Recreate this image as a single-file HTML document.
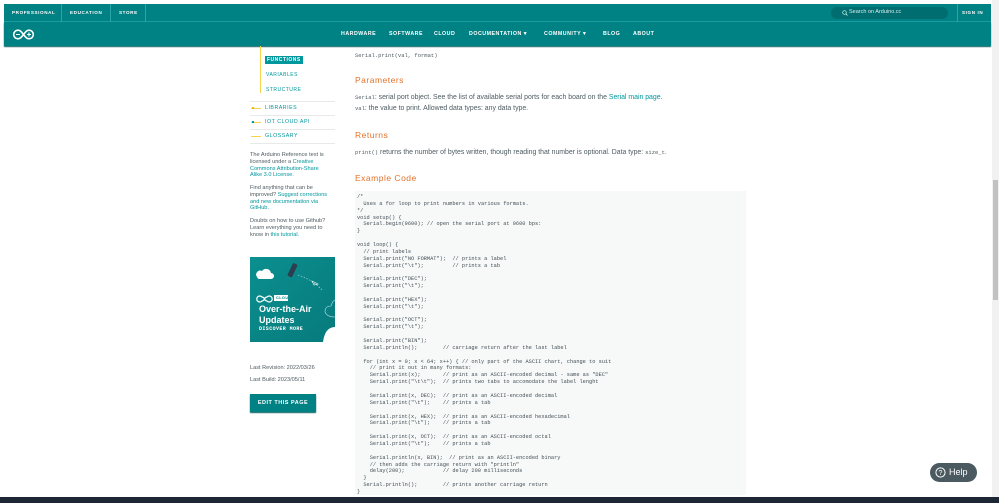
<!DOCTYPE html>
<html><head><meta charset="utf-8"><style>
*{margin:0;padding:0;box-sizing:border-box}
body{width:999px;height:503px;overflow:hidden;background:#fff;font-family:"Liberation Sans",sans-serif;position:relative;color:#4e5b61}
.abs{position:absolute}
.top{left:4px;top:4px;width:987px;height:18px;background:#008184;border-bottom:1px solid #1a9da0}
.top span{position:absolute;top:0;height:18px;line-height:17px;color:#fff;font-size:4.6px;font-weight:bold;letter-spacing:.6px}
.sep{position:absolute;top:0;width:1px;height:18px;background:#2aa5a8}
.nav{left:4px;top:22px;width:987px;height:24px;background:#008184;box-shadow:0 1px 1px #0a5e60}
.nav span{position:absolute;top:0;line-height:24px;color:#fff;font-size:5.3px;font-weight:bold;letter-spacing:.5px}
.side{font-size:5px;color:#00979d;letter-spacing:.5px;font-weight:bold}
.hr{position:absolute;left:250px;width:85px;height:1px;background:#e8eaea}
.small{font-size:5.6px;line-height:6.8px;color:#4e5b61;width:79px}
.small a{color:#00979d}
.mono{font-family:"Liberation Mono",monospace}
h3{position:absolute;left:355px;font-size:8.5px;font-weight:normal;color:#e47128;letter-spacing:.5px}
.p{position:absolute;left:355px;font-size:6.9px;color:#4e5b61}
pre{position:absolute;left:355px;top:191px;width:391px;height:304px;background:#f7f9f9;font-family:"Liberation Mono",monospace;font-size:5.3px;line-height:6.86px;padding:3px 0 0 2px;color:#434f54}
</style></head><body>
<div class="abs top">
<span style="left:8px">PROFESSIONAL</span><div class="sep" style="left:57px"></div>
<span style="left:66px">EDUCATION</span><div class="sep" style="left:106px"></div>
<span style="left:115px">STORE</span><div class="sep" style="left:141px"></div>
<div class="abs" style="left:827px;top:3px;width:117px;height:12px;border-radius:6px;background:#006d70"></div>
<svg class="abs" style="left:838px;top:6px" width="6" height="6" viewBox="0 0 6 6"><circle cx="2.5" cy="2.5" r="1.8" fill="none" stroke="#cfe" stroke-width=".7"/><path d="M3.8 3.8L5.5 5.5" stroke="#cfe" stroke-width=".7"/></svg>
<span style="left:845px;font-weight:normal;font-size:5.5px;letter-spacing:0;color:#d8eeee">Search on Arduino.cc</span>
<div class="sep" style="left:953px"></div>
<span style="left:958px">SIGN IN</span>
</div>
<div class="abs nav">
<svg class="abs" style="left:8px;top:7px" width="23" height="11" viewBox="0 0 23 11"><path d="M6 1.2A4.3 4.3 0 1 0 6 9.8C9 9.8 10 7 11.5 5.5 13 4 14 1.2 17 1.2A4.3 4.3 0 1 1 17 9.8C14 9.8 13 7 11.5 5.5 10 4 9 1.2 6 1.2Z" fill="none" stroke="#fff" stroke-width="1.6"/><path d="M4 5.5h4M15 5.5h4M17 3.5v4" stroke="#fff" stroke-width="1.1"/></svg>
<span style="left:337px">HARDWARE</span><span style="left:385px">SOFTWARE</span><span style="left:430px">CLOUD</span>
<span style="left:465px">DOCUMENTATION ▾</span><span style="left:540px">COMMUNITY ▾</span><span style="left:599px">BLOG</span><span style="left:629px">ABOUT</span>
</div>
<div class="abs" style="left:260px;top:46px;width:1px;height:47px;background:#f5d54b"></div>
<div class="abs side" style="left:265px;top:56px;background:#00979d;color:#fff;padding:1px 2px">FUNCTIONS</div>
<div class="abs side" style="left:266px;top:72px;font-weight:normal">VARIABLES</div>
<div class="abs side" style="left:266px;top:87px;font-weight:normal">STRUCTURE</div>
<div class="hr" style="top:101px"></div><div class="hr" style="top:115px"></div><div class="hr" style="top:129px"></div><div class="hr" style="top:143px"></div>
<div class="abs" style="left:251px;top:108px;width:10px;height:1px;background:#f5d54b"></div><div class="abs" style="left:252px;top:107px;width:2px;height:2px;background:#f5b90f"></div>
<div class="abs" style="left:251px;top:122px;width:10px;height:1px;background:#f5d54b"></div><div class="abs" style="left:252px;top:121px;width:2px;height:2px;background:#00979d"></div>
<div class="abs" style="left:251px;top:136px;width:10px;height:1px;background:#f5d54b"></div>
<div class="abs side" style="left:265px;top:105px;font-weight:normal;font-size:5.3px">LIBRARIES</div>
<div class="abs side" style="left:265px;top:119px;font-weight:normal;font-size:5.3px">IOT CLOUD API</div>
<div class="abs side" style="left:265px;top:133px;font-weight:normal;font-size:5.3px">GLOSSARY</div>
<div class="abs small" style="left:250px;top:152px">The Arduino Reference text is licensed under a <a>Creative Commons Attribution-Share Alike 3.0 License.</a></div>
<div class="abs small" style="left:250px;top:185px">Find anything that can be improved? <a>Suggest corrections and new documentation via GitHub.</a></div>
<div class="abs small" style="left:250px;top:218px">Doubts on how to use Github? Learn everything you need to know in <a>this tutorial.</a></div>
<div class="abs" style="left:250px;top:257px;width:85px;height:85px;background:linear-gradient(135deg,#0b8f8f,#077a7c);overflow:hidden">
<svg class="abs" style="left:0;top:0" width="85" height="85" viewBox="0 0 85 85"><path d="M7 20a4 4 0 0 1 5-6 5 5 0 0 1 9 2 3 3 0 0 1 0 6H9a3 3 0 0 1-2-2z" fill="#fff"/><rect x="40" y="6" width="5" height="14" rx="1" fill="#2c3e50" transform="rotate(25 42 13)"/><path d="M48 18q15 5 24 15" stroke="#cde" stroke-dasharray="1.5 1.5" fill="none" stroke-width=".6"/><path d="M62 24l6 3-4 1z" fill="none" stroke="#fff" stroke-width=".6"/><path d="M85 60q-8 0-10-5 0-6 6-6 2-6 4-6" fill="none" stroke="#bde" stroke-width=".6"/><path d="M85 70q-10 0-12 15h12z" fill="#fff"/><path d="M12 40a3 3 0 1 0 0 4c1 0 2-1 2.5-2 .5-1 1.5-2 2.5-2a3 3 0 1 1 0 4c-1 0-2-1-2.5-2-.5-1-1.5-2-2.5-2z" fill="none" stroke="#fff" stroke-width="1.2"/><rect x="24" y="38" width="14" height="6" fill="#fff"/></svg>
<div class="abs" style="left:26px;top:38px;font-size:4px;font-weight:bold;color:#0b8f8f;letter-spacing:.3px">CLOUD</div>
<div class="abs" style="left:9px;top:47px;color:#fff;font-weight:bold;font-size:9px;line-height:11px">Over-the-Air<br>Updates</div>
<div class="abs mono" style="left:9px;top:69px;color:#fff;font-size:5px;font-weight:bold;letter-spacing:.4px">DISCOVER MORE</div>
</div>
<div class="abs small" style="left:250px;top:365px;width:120px">Last Revision: 2022/03/26</div>
<div class="abs small" style="left:250px;top:377px;width:120px">Last Build: 2023/05/11</div>
<div class="abs" style="left:250px;top:394px;width:66px;height:18px;background:#008184;color:#fff;font-size:5.5px;font-weight:bold;letter-spacing:.5px;line-height:18px;text-align:center;box-shadow:0 1px 1px #0a5e60">EDIT THIS PAGE</div>

<div class="p mono" style="top:52px;font-size:5.5px">Serial.print(val, format)</div>
<h3 style="top:75px">Parameters</h3>
<div class="p" style="top:94px"><span class="mono" style="font-size:5.5px">Serial</span>: serial port object. See the list of available serial ports for each board on the <span style="color:#00979d">Serial main page</span>.</div>
<div class="p" style="top:105px"><span class="mono" style="font-size:5.5px">val</span>: the value to print. Allowed data types: any data type.</div>
<h3 style="top:130px">Returns</h3>
<div class="p" style="top:149px"><span class="mono" style="font-size:5.5px">print()</span> returns the number of bytes written, though reading that number is optional. Data type: <span class="mono" style="font-size:5.5px">size_t</span>.</div>
<h3 style="top:173px">Example Code</h3>
<pre>/*
  Uses a for loop to print numbers in various formats.
*/
void setup() {
  Serial.begin(9600); // open the serial port at 9600 bps:
}

void loop() {
  // print labels
  Serial.print("NO FORMAT");  // prints a label
  Serial.print("\t");         // prints a tab

  Serial.print("DEC");
  Serial.print("\t");

  Serial.print("HEX");
  Serial.print("\t");

  Serial.print("OCT");
  Serial.print("\t");

  Serial.print("BIN");
  Serial.println();        // carriage return after the last label

  for (int x = 0; x &lt; 64; x++) { // only part of the ASCII chart, change to suit
    // print it out in many formats:
    Serial.print(x);       // print as an ASCII-encoded decimal - same as "DEC"
    Serial.print("\t\t");  // prints two tabs to accomodate the label lenght

    Serial.print(x, DEC);  // print as an ASCII-encoded decimal
    Serial.print("\t");    // prints a tab

    Serial.print(x, HEX);  // print as an ASCII-encoded hexadecimal
    Serial.print("\t");    // prints a tab

    Serial.print(x, OCT);  // print as an ASCII-encoded octal
    Serial.print("\t");    // prints a tab

    Serial.println(x, BIN);  // print as an ASCII-encoded binary
    // then adds the carriage return with "println"
    delay(200);            // delay 200 milliseconds
  }
  Serial.println();        // prints another carriage return
}</pre>
<div class="abs" style="left:930px;top:463px;width:47px;height:19px;border-radius:10px;background:#4a5a60;color:#fff;font-size:9px;line-height:19px;padding-left:19px">Help</div>
<svg class="abs" style="left:935px;top:467px" width="11" height="11" viewBox="0 0 11 11"><circle cx="5.5" cy="5.5" r="4.6" fill="none" stroke="#fff" stroke-width="1"/><text x="5.5" y="8" font-size="7" fill="#fff" text-anchor="middle" font-family="Liberation Sans">?</text></svg>
<div class="abs" style="left:992px;top:0;width:7px;height:497px;background:#f1f1f1"></div>
<div class="abs" style="left:993px;top:180px;width:5px;height:120px;background:#c1c1c1"></div>
<div class="abs" style="left:0;top:497px;width:999px;height:6px;background:#1c2733"></div>
</body></html>
